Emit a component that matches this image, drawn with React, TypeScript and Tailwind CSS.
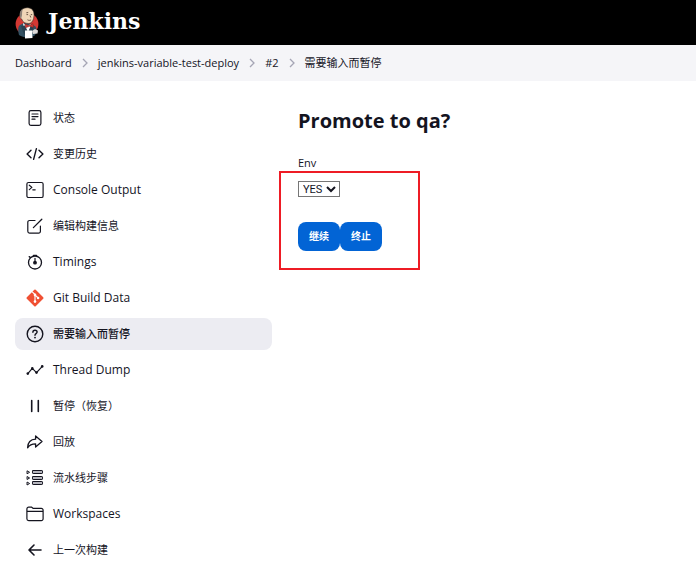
import React from "react";

const svgBase = {
  viewBox: "0 0 18 18",
  fill: "none",
  stroke: "currentColor",
  strokeWidth: 1.2,
  strokeLinecap: "round" as const,
  strokeLinejoin: "round" as const,
  "aria-hidden": true,
  className: "size-[18px] shrink-0",
};

const icons: Record<string, React.ReactNode> = {
  status: (
    <svg {...svgBase}>
      <rect x="3.1" y="1.6" width="11.8" height="14.8" rx="1.8" />
      <path d="M6 5h6M6 7.6h6M6 10.2h3" />
    </svg>
  ),
  changes: (
    <svg {...svgBase} strokeWidth={1.4}>
      <path d="M5 5.2 1.1 9 5 12.8M13 5.2 16.9 9 13 12.8M10.4 3.6 7.6 14.4" />
    </svg>
  ),
  console: (
    <svg {...svgBase}>
      <rect x="0.9" y="1.5" width="16.2" height="15" rx="1.6" />
      <path d="M3.3 4.2 5.9 6.4 3.3 8.6M6.8 8.8h2.4" />
    </svg>
  ),
  edit: (
    <svg {...svgBase}>
      <path d="M9 3.5H3.6a1.8 1.8 0 0 0-1.8 1.8v9a1.8 1.8 0 0 0 1.8 1.8h9a1.8 1.8 0 0 0 1.8-1.8V9" />
      <path d="M7.4 10.6 15.8 2.2" strokeWidth="1.3" />
    </svg>
  ),
  timings: (
    <svg {...svgBase}>
      <circle cx="9" cy="9.500" r="6.500" strokeWidth="1.300" />
      <path d="M7.500 2.400h3M3.200 3.600l1.400 1" strokeWidth="1.300" />
      <path d="M9 5.400V9" />
      <circle cx="9" cy="9.700" r="1.300" fill="currentColor" />
    </svg>
  ),
  git: (
    <svg viewBox="0 0 18 18" aria-hidden="true" className="size-[18px] shrink-0">
      <rect x="2.7" y="2.7" width="12.6" height="12.6" rx="1" fill="#f05033" transform="rotate(45 9 9)" />
      <path d="M6 2.6 9 5.600v7.200M9 5.800l3.200 3.200" stroke="#fff" strokeWidth="1.100" fill="none" />
      <circle cx="9" cy="5.900" r="1.300" fill="#fff" />
      <circle cx="9" cy="12.600" r="1.300" fill="#fff" />
      <circle cx="12.100" cy="9" r="1.300" fill="#fff" />
    </svg>
  ),
  question: (
    <svg {...svgBase} strokeWidth={1.4}>
      <circle cx="9" cy="9" r="7.800" />
      <path d="M6.900 7.200c0-1.300.9-2 2.100-2s2.100.8 2.100 1.900c0 1.500-2.100 1.600-2.100 3.100" />
      <circle cx="9" cy="12.600" r="0.900" fill="currentColor" stroke="none" />
    </svg>
  ),
  threads: (
    <svg {...svgBase}>
      <path d="M1.800 12.600 6.300 7.400l4.200 4.200 5.800-6.200" />
      <g fill="currentColor" stroke="none">
        <circle cx="1.800" cy="12.600" r="1.300" />
        <circle cx="6.300" cy="7.400" r="1.300" />
        <circle cx="10.500" cy="11.600" r="1.300" />
        <circle cx="16.200" cy="5.400" r="1.300" />
      </g>
    </svg>
  ),
  pause: (
    <svg {...svgBase} strokeWidth={1.6}>
      <path d="M5.700 3.600v10.800M12.300 3.600v10.800" />
    </svg>
  ),
  replay: (
    <svg {...svgBase} strokeWidth={1.3}>
      <path d="M9.600 3 16 8.600l-6.400 5.400v-3.200c-4 0-6.200 1-8 4 .2-5.400 3.400-8.400 8-8.600Z" />
    </svg>
  ),
  steps: (
    <svg {...svgBase} strokeWidth={1}>
      <path d="M1.400 2 3.600 3.300 1.400 4.600ZM1.400 7.700 3.600 9 1.400 10.300ZM1.400 13.200 3.600 14.500 1.400 15.800Z" />
      <g fill="#b5b5bd">
        <rect x="6.500" y="1.500" width="10" height="3" rx="0.600" />
        <rect x="6.500" y="7.500" width="10" height="3" rx="0.600" />
        <rect x="6.500" y="12.500" width="10" height="3" rx="0.600" />
      </g>
    </svg>
  ),
  folder: (
    <svg {...svgBase}>
      <path d="M0.900 13.800V4a1.800 1.800 0 0 1 1.800-1.800h3l1.600 1.200h8a1.800 1.800 0 0 1 1.800 1.800v8.600a1.800 1.800 0 0 1-1.800 1.800H2.700a1.800 1.800 0 0 1-1.800-1.800ZM0.900 6.400h16.200" />
    </svg>
  ),
  back: (
    <svg {...svgBase} strokeWidth={1.6}>
      <path d="M8 4 3 9l5 5M3.200 9H15" />
    </svg>
  ),
};

const tasks = [
  { icon: "status", label: "状态", cjk: true },
  { icon: "changes", label: "变更历史", cjk: true },
  { icon: "console", label: "Console Output" },
  { icon: "edit", label: "编辑构建信息", cjk: true },
  { icon: "timings", label: "Timings" },
  { icon: "git", label: "Git Build Data" },
  { icon: "question", label: "需要输入而暂停", cjk: true, active: true },
  { icon: "threads", label: "Thread Dump" },
  { icon: "pause", label: "暂停（恢复）", cjk: true },
  { icon: "replay", label: "回放", cjk: true },
  { icon: "steps", label: "流水线步骤", cjk: true },
  { icon: "folder", label: "Workspaces" },
  { icon: "back", label: "上一次构建", cjk: true },
];

const crumbs = ["Dashboard", "jenkins-variable-test-deploy", "#2", "需要输入而暂停"];

function Mascot() {
  return (
    <svg viewBox="0 0 24 32" aria-hidden="true" className="h-8 w-6 shrink-0">
      <circle cx="12" cy="17" r="11.400" fill="#d33833" />
      <path d="M4 28c-1-4-1.500-8 1-10l4-2 8 1 4 3c1 3 0 8-2 9-4 2-11 2-15-1Z" fill="#335061" />
      <path d="M8 16l4 3 4-2-1 7-3 5-3-6Z" fill="#fff" />
      <path d="M10 18.500 12.500 24 9 28 6 19ZM16 18.500 13.500 24l3 3 2-7Z" fill="#2a4251" />
      <path d="M5 8.500C4.500 3.500 8 .600 12.500.700 17 .800 19.400 4 19 8.500c-.200 4-1.800 8-5.500 8-3.500 0-6-1.500-6.800-4.500C5.600 12 4.800 10.500 5 8.500Z" fill="#f0d6b7" stroke="#3a332e" strokeWidth=".6" />
      <path d="M5 10c-.8-4 .3-7 3-8.500C7 4 7.200 5.500 7 8l-.6 3Z" fill="#8d8177" />
      <path d="M11.500 7.600h1.600M15.800 7.600h1.400M12.500 12.800c1.200.8 2.700.7 3.600 0M15 8.500l.8 2M11.300 5.800l1.900-.3" stroke="#49352a" strokeWidth=".8" fill="none" />
      <path d="m10 17 4 1.600 4-2 .5 3.800-4-1.100-4 1.500Z" fill="#d33833" stroke="#81221f" strokeWidth=".5" />
      <path d="M10 23.500h7l.5 7.500-7.500.6Z" fill="#fff" />
      <path d="m17 24 3-2 3 1.500-.5 3-4.500.5Z" fill="#dcd9d8" />
    </svg>
  );
}

export default function App() {
  return (
    <div className="min-h-screen bg-white font-['Open_Sans','Noto_Sans_CJK_SC',sans-serif] text-xs text-[#14141f]">
      <header className="flex h-[45px] items-center bg-black px-[15px]">
        <a href="#" className="flex items-center gap-[9px] text-white">
          <Mascot />
          <span className="pb-1 font-['DejaVu_Serif',serif] text-[22px] leading-8 font-bold">Jenkins</span>
        </a>
      </header>

      <nav aria-label="Breadcrumb" className="bg-[#f5f5f8] px-[15px]">
        <ol className="flex h-9 items-center gap-2.5 text-[11px]">
          {crumbs.map((crumb, i) => (
            <li key={crumb} className="flex items-center gap-2.5">
              {i > 0 && (
                <svg viewBox="0 0 6 10" aria-hidden="true" className="h-2.5 w-1.5 fill-none stroke-[#a5a5b5]" strokeWidth="1.3">
                  <path d="m1 1 4 4-4 4" />
                </svg>
              )}
              <a href="#">{crumb}</a>
            </li>
          ))}
        </ol>
      </nav>

      <div className="flex gap-[26px] px-[15px] pt-[21px]">
        <nav aria-label="Tasks" className="w-[257px] shrink-0">
          <ul className="flex flex-col gap-1">
            {tasks.map((task) => (
              <li key={task.label}>
                <a
                  href="#"
                  className={`flex h-8 items-center gap-[9px] rounded-lg px-[11px] ${
                    task.active ? "bg-[#ececf2] font-medium" : ""
                  } ${task.cjk ? "text-[11px]" : "text-xs"}`}
                >
                  {icons[task.icon]}
                  <span>{task.label}</span>
                </a>
              </li>
            ))}
          </ul>
        </nav>

        <main className="min-w-0 flex-1">
          <h1 className="text-xl leading-[38px] font-bold">Promote to qa?</h1>
          <form className="relative mt-[15px]" onSubmit={(e) => e.preventDefault()}>
            <label htmlFor="env" className="block text-[11px] leading-4">
              Env
            </label>
            <select
              id="env"
              defaultValue="YES"
              className="mt-[10px] block h-4 w-[42px] border border-[#767676] bg-white font-[Roboto,sans-serif] text-[11px]"
            >
              <option>YES</option>
              <option>NO</option>
            </select>
            <div className="mt-[25px] flex">
              <button type="submit" className="h-[29px] w-[42px] rounded-lg bg-[#0264d5] text-[10px] font-bold text-white">
                继续
              </button>
              <button type="button" className="h-[29px] w-[42px] rounded-lg bg-[#0264d5] text-[10px] font-bold text-white">
                终止
              </button>
            </div>
            <div className="pointer-events-none absolute top-4 -left-[19px] h-[99px] w-[141px] border-2 border-[#ee1c25]" />
          </form>
        </main>
      </div>
    </div>
  );
}
